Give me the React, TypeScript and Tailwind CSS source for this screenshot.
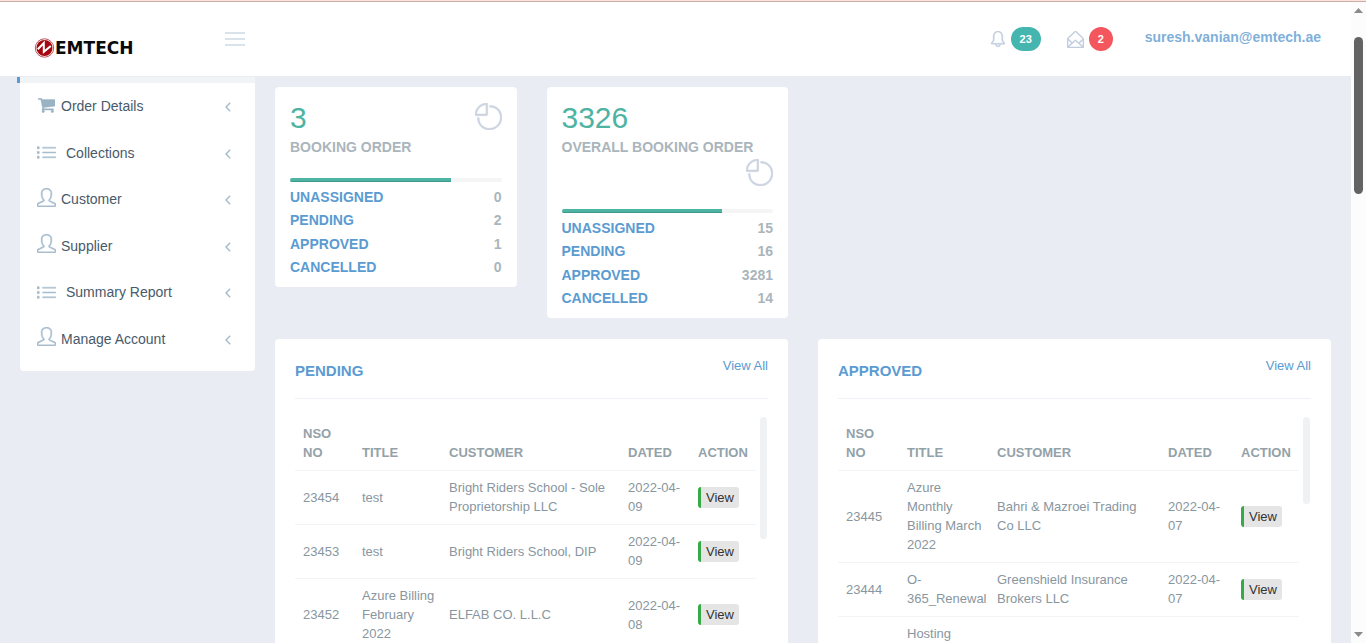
import React from "react";
import {
  SlBell,
  SlEnvelopeOpen,
  SlList,
  SlPieChart,
  SlUser,
} from "react-icons/sl";

interface Stat {
  label: string;
  value: number;
}

interface Order {
  nso: string;
  title: string;
  customer: string;
  dated: string;
}

const menu = [
  { label: "Order Details", icon: "cart" },
  { label: "Collections", icon: "list" },
  { label: "Customer", icon: "user" },
  { label: "Supplier", icon: "user" },
  { label: "Summary Report", icon: "list" },
  { label: "Manage Account", icon: "user" },
];

const bookingStats: Stat[] = [
  { label: "UNASSIGNED", value: 0 },
  { label: "PENDING", value: 2 },
  { label: "APPROVED", value: 1 },
  { label: "CANCELLED", value: 0 },
];

const overallStats: Stat[] = [
  { label: "UNASSIGNED", value: 15 },
  { label: "PENDING", value: 16 },
  { label: "APPROVED", value: 3281 },
  { label: "CANCELLED", value: 14 },
];

const pendingOrders: Order[] = [
  {
    nso: "23454",
    title: "test",
    customer: "Bright Riders School - Sole Proprietorship LLC",
    dated: "2022-04-09",
  },
  {
    nso: "23453",
    title: "test",
    customer: "Bright Riders School, DIP",
    dated: "2022-04-09",
  },
  {
    nso: "23452",
    title: "Azure Billing February 2022",
    customer: "ELFAB CO. L.L.C",
    dated: "2022-04-08",
  },
];

const approvedOrders: Order[] = [
  {
    nso: "23445",
    title: "Azure Monthly Billing March 2022",
    customer: "Bahri & Mazroei Trading Co LLC",
    dated: "2022-04-07",
  },
  {
    nso: "23444",
    title: "O-365_Renewal",
    customer: "Greenshield Insurance Brokers LLC",
    dated: "2022-04-07",
  },
  {
    nso: "23443",
    title: "Hosting Monthly Maintenance Renewal Billing March 2022",
    customer: "ELFAB CO. L.L.C",
    dated: "2022-04-07",
  },
];

function Logo() {
  return (
    <svg width="106" height="22" viewBox="0 0 106 22" role="img" aria-label="EMTECH">
      <circle cx="10.5" cy="11" r="9.2" fill="#fff" stroke="#c0525a" strokeWidth="1" />
      <circle cx="10.5" cy="11" r="8" fill="#a5060f" />
      <path
        d="M3.8 12.2 L9.8 6 L9.8 14.8 L16.8 9"
        fill="none"
        stroke="#fff"
        strokeWidth="2"
      />
      <text
        x="21"
        y="17"
        fontFamily="DejaVu Sans, sans-serif"
        fontSize="17"
        fontWeight="700"
        fill="#0a0a0a"
      >
        EMTECH
      </text>
    </svg>
  );
}

function CartIcon() {
  return (
    <svg
      viewBox="0 256 1664 1408"
      className="mb-0.5 ml-px mr-1.5 h-[15px] w-[17px] text-[#9ab3c4]"
      fill="currentColor"
      stroke="currentColor"
      strokeWidth="40"
    >
      <path d="M640 1536q0 52-38 90t-90 38-90-38-38-90 38-90 90-38 90 38 38 90zm896 0q0 52-38 90t-90 38-90-38-38-90 38-90 90-38 90 38 38 90zm128-1088v512q0 24-16.500 42.500t-40.500 21.500l-1044 122q13 60 13 70 0 16-24 64h920q26 0 45 19t19 45-19 45-45 19h-1024q-26 0-45-19t-19-45q0-11 8-31.500t16-36 21.500-40 15.500-29.500l-177-823h-204q-26 0-45-19t-19-45 19-45 45-19h256q16 0 28.500 6.500t19.500 15.500 13 24.500 8 26 5.500 29.500 4.500 26h1201q26 0 45 19t19 45z" />
    </svg>
  );
}

function MenuIcon({ icon }: { icon: string }) {
  if (icon === "cart") {
    return <CartIcon />;
  }
  if (icon === "list") {
    return <SlList strokeWidth={24} className="mr-2.5 size-[19px] text-[#a7bdcd]" />;
  }
  return (
    <SlUser strokeWidth={24} className="mb-1 mr-[5px] size-[19px] text-[#a7bdcd]" />
  );
}

function Header() {
  return (
    <header className="flex h-[74px] shrink-0 items-center justify-between bg-white pl-[34px] pr-[30px]">
      <div className="flex w-[211px] items-center justify-between">
        <a href="#" className="mt-[18px]">
          <Logo />
        </a>
        <button aria-label="Toggle menu" className="flex w-5 flex-col gap-1">
          <span className="h-0.5 bg-[#d9e3ec]" />
          <span className="h-0.5 bg-[#d9e3ec]" />
          <span className="h-0.5 bg-[#d9e3ec]" />
        </button>
      </div>
      <div className="flex items-center">
        <button className="flex items-center gap-[5px]" aria-label="Notifications">
          <SlBell strokeWidth={30} className="size-4 text-[#c0cddc]" />
          <span className="h-6 w-[30px] rounded-full bg-[#45b6af] text-[11px] font-bold leading-6 text-white">
            23
          </span>
        </button>
        <button className="ml-[26px] flex items-center gap-[5px]" aria-label="Messages">
          <SlEnvelopeOpen strokeWidth={30} className="size-[17px] text-[#c0cddc]" />
          <span className="size-6 rounded-full bg-[#f3565d] text-[11px] font-bold leading-6 text-white">
            2
          </span>
        </button>
        <a href="#" className="ml-8 pb-1 text-sm font-bold text-[#7fb0da]">
          suresh.vanian@emtech.ae
        </a>
      </div>
    </header>
  );
}

function Sidebar() {
  return (
    <nav className="mt-px w-[235px] shrink-0 rounded-b bg-white pb-[9px]">
      <div className="-ml-[3px] h-1.5 border-l-[3px] border-[#5b9bd1] bg-[#f1f4f7]" />
      <ul className="grid min-h-[279px] auto-rows-fr">
        {menu.map((item) => (
          <li key={item.label} className="flex">
            <a
              href="#"
              className="flex flex-1 items-center pl-[17px] pr-6 text-sm text-[#485a6a]"
            >
              <MenuIcon icon={item.icon} />
              <span className="flex-1">{item.label}</span>
              <svg
                width="6"
                height="10"
                viewBox="0 0 6 10"
                fill="none"
                className="mt-0.5"
              >
                <path d="M5.2 0.7 L1 5 L5.2 9.3" stroke="#a7bdcd" strokeWidth="1.5" />
              </svg>
            </a>
          </li>
        ))}
      </ul>
    </nav>
  );
}

function StatCard({
  total,
  title,
  stats,
}: {
  total: number;
  title: string;
  stats: Stat[];
}) {
  return (
    <section className="rounded bg-white px-[15px] pb-2 pt-[15px]">
      <div className="mb-5 flex flex-wrap items-start">
        <div>
          <h3 className="mb-0.5 text-3xl leading-8 text-[#4db3a2]">{total}</h3>
          <h4 className="text-sm font-bold leading-[22px] text-[#aab5bc]">{title}</h4>
        </div>
        <div className="ml-auto h-[31px] pt-px">
          <SlPieChart strokeWidth={20} className="size-[27px] text-[#cbd4e0]" />
        </div>
      </div>
      <div className="mb-[3px] h-1 overflow-hidden rounded-xs bg-[#f5f5f5]">
        <div className="h-full w-[76%] border-b border-[#3f9a8b] bg-[#4db3a2]" />
      </div>
      <ul className="grid min-h-[94px] auto-rows-fr text-sm font-bold">
        {stats.map((stat) => (
          <li key={stat.label} className="flex items-center justify-between">
            <a href="#" className="text-[#5b9bd1]">
              {stat.label}
            </a>
            <span className="text-[#aab5bc]">{stat.value}</span>
          </li>
        ))}
      </ul>
    </section>
  );
}

function OrderPanel({
  title,
  orders,
  cols,
  bar,
}: {
  title: string;
  orders: Order[];
  cols: string[];
  bar: string;
}) {
  return (
    <section className="rounded bg-white px-5 pt-3">
      <div className="flex h-12 justify-between border-b border-[#eef1f5] pt-2">
        <h2 className="text-[15px] font-bold leading-6 text-[#5b9bd1]">{title}</h2>
        <a href="#" className="text-[13px] leading-[14px] text-[#5b9bd1]">
          View All
        </a>
      </div>
      <div className="flex items-start gap-1 pr-px pt-[18px]">
        <table className="flex-1 table-fixed border-collapse text-left text-[13px] leading-[19px] text-[#8896a0]">
          <colgroup>
            {cols.map((col, i) => (
              <col key={i} className={col} />
            ))}
          </colgroup>
          <thead>
            <tr className="border-b border-[#f2f5f8] align-bottom text-[#93a2a9]">
              <th className="pb-2 pl-2 pr-5 pt-[7px]">NSO NO</th>
              <th className="px-[5px] pb-2 pt-[7px]">TITLE</th>
              <th className="px-[5px] pb-2 pt-[7px]">CUSTOMER</th>
              <th className="px-[5px] pb-2 pt-[7px]">DATED</th>
              <th className="px-[5px] pb-2 pt-[7px]">ACTION</th>
            </tr>
          </thead>
          <tbody>
            {orders.map((order) => (
              <tr key={order.nso} className="border-b border-[#f2f5f8]">
                <td className="pb-2 pl-2 pr-[5px] pt-[7px]">{order.nso}</td>
                <td className="px-[5px] pb-2 pt-[7px]">{order.title}</td>
                <td className="pb-2 pl-[5px] pr-2 pt-[7px]">{order.customer}</td>
                <td className="px-[5px] pb-2 pt-[7px]">{order.dated}</td>
                <td className="px-[5px] pb-2 pt-[7px]">
                  <button className="block rounded-[3px] border-l-[3px] border-[#35aa47] bg-[#e5e5e5] px-[5px] leading-[21px] text-[#333]">
                    View
                  </button>
                </td>
              </tr>
            ))}
          </tbody>
        </table>
        <div className={`w-[7px] rounded-full bg-[#eff1f3] ${bar}`} />
      </div>
    </section>
  );
}

export default function App() {
  return (
    <div className="flex h-screen flex-col overflow-hidden bg-[#e9ecf3] font-['Liberation_Sans',Arial,sans-serif]">
      <div className="h-0.5 shrink-0 border-b border-[#ccaea9] bg-[#fce4de]" />
      <div className="flex min-h-0 flex-1">
        <div className="flex min-w-0 flex-1 flex-col overflow-hidden">
          <Header />
          <div className="flex items-start gap-5 px-5">
            <Sidebar />
            <main className="min-w-0 flex-1 pt-[11px]">
              <div className="grid grid-cols-4 items-start gap-[30px]">
                <StatCard total={3} title="BOOKING ORDER" stats={bookingStats} />
                <StatCard
                  total={3326}
                  title="OVERALL BOOKING ORDER"
                  stats={overallStats}
                />
              </div>
              <div className="mt-[21px] grid grid-cols-2 gap-[30px]">
                <OrderPanel
                  title="PENDING"
                  orders={pendingOrders}
                  cols={["w-[62px]", "w-[87px]", "", "w-[70px]", "w-[63px]"]}
                  bar="h-[122px]"
                />
                <OrderPanel
                  title="APPROVED"
                  orders={approvedOrders}
                  cols={["w-[64px]", "w-[90px]", "", "w-[73px]", "w-[63px]"]}
                  bar="h-[87px]"
                />
              </div>
            </main>
          </div>
        </div>
        {/* page scrollbar */}
        <div className="flex w-[15px] shrink-0 flex-col items-center justify-between bg-[#fcfcfc] py-1.5">
          <div className="flex flex-col items-center gap-6">
            <svg width="9" height="5" viewBox="0 0 9 5" fill="#8a8a8a">
              <path d="M4.5 0 L9 5 L0 5 Z" />
            </svg>
            <div className="h-[157px] w-[9px] rounded-full bg-[#636363]" />
          </div>
          <svg width="9" height="5" viewBox="0 0 9 5" fill="#8a8a8a">
            <path d="M0 0 L9 0 L4.5 5 Z" />
          </svg>
        </div>
      </div>
    </div>
  );
}
